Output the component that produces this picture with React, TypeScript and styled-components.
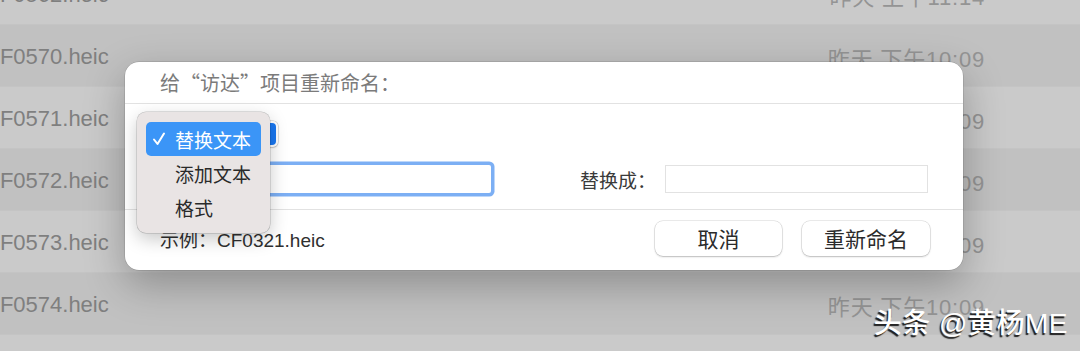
import React from 'react';
import styled, { createGlobalStyle } from 'styled-components';

const GlobalStyle = createGlobalStyle`
   html, body {
      margin: 0;
      padding: 0;
      background: #c6c6c6;
      overflow: hidden;
   }
   * {
      box-sizing: border-box;
   }
`;

const CJK = `"Liberation Sans", "Noto Sans CJK SC", sans-serif`;
const CJK_FIRST = `"Noto Sans CJK SC", "Liberation Sans", sans-serif`;

const Screen = styled.div`
   position: relative;
   width: 1080px;
   height: 351px;
   overflow: hidden;
   font-family: ${CJK};
   background: #c6c6c6;
`;

const FileList = styled.div`
   display: flex;
   flex-direction: column;
   margin-top: -37px;
`;

const FileRow = styled.div<{ $alt?: boolean }>`
   display: flex;
   align-items: center;
   justify-content: space-between;
   height: 62px;
   padding-right: 95px;
   background: ${p => (p.$alt ? '#c1c1c1' : '#cacaca')};
   border-bottom: 1px solid #c4c4c4;
`;

const FileName = styled.span`
   margin-left: -16px;
   padding-top: 2px;
   font-size: 22px;
   color: #7f7f7f;
`;

const FileDate = styled.span`
   padding-top: 2px;
   font-size: 22px;
   letter-spacing: 0.8px;
   color: #949494;
`;

const Dialog = styled.div`
   position: absolute;
   left: 125px;
   top: 62px;
   width: 838px;
   height: 208px;
   display: flex;
   flex-direction: column;
   background: #ffffff;
   border-radius: 14px;
   box-shadow: 0 0 0 0.5px rgba(0, 0, 0, 0.18), 0 14px 40px rgba(0, 0, 0, 0.28);
`;

const DialogTitle = styled.div`
   height: 42px;
   display: flex;
   align-items: center;
   padding-left: 35px;
   font-family: ${CJK_FIRST};
   font-size: 20px;
   color: #7b7b7b;
   border-bottom: 1px solid #e2e2e2;
`;

const DialogBody = styled.div`
   height: 106px;
   display: flex;
   flex-direction: column;
   gap: 18px;
   padding: 17px 35px 0 35px;
   border-bottom: 1px solid #e2e2e2;
`;

const PopupButton = styled.div`
   width: 118px;
   height: 26px;
   display: flex;
   align-items: center;
   justify-content: space-between;
   padding-left: 8px;
   font-size: 16px;
   color: #333;
   background: #fff;
   border-radius: 5px;
   box-shadow: 0 0 0 0.5px rgba(0, 0, 0, 0.2), 0 1px 2px rgba(0, 0, 0, 0.15);
`;

const PopupArrow = styled.span`
   width: 16px;
   height: 22px;
   margin-right: 2px;
   border-radius: 4px;
   background: #1877f2;
`;

const FieldRow = styled.div`
   display: flex;
   align-items: center;
   height: 28px;
`;

const FieldLabel = styled.span<{ $gap?: number }>`
   font-size: 19px;
   color: #3a3a3a;
   margin-left: ${p => p.$gap ?? 0}px;
   margin-right: 9px;
   white-space: nowrap;
`;

const TextField = styled.div<{ $focused?: boolean; $width?: number }>`
   height: 28px;
   flex: ${p => (p.$width ? `0 0 ${p.$width}px` : '1')};
   background: #fff;
   box-shadow: ${p =>
      p.$focused
         ? '0 0 0 3.5px rgba(74, 144, 240, 0.72)'
         : 'inset 0 0 0 1px #e2e2e2, inset 0 -1px 0 #cfcfcf'};
   border-radius: ${p => (p.$focused ? '2px' : '0')};
`;

const DialogFooter = styled.div`
   flex: 1;
   display: flex;
   align-items: center;
   padding: 0 33px 4px 35px;
`;

const Example = styled.span`
   flex: 1;
   font-size: 19px;
   color: #2f2f2f;
`;

const PushButton = styled.button<{ $width: number }>`
   width: ${p => p.$width}px;
   height: 35px;
   margin-left: 20px;
   font-family: ${CJK};
   font-size: 21px;
   color: #2b2b2b;
   background: #fff;
   border: none;
   border-radius: 8px;
   box-shadow: 0 0 0 0.5px rgba(0, 0, 0, 0.16), 0 1px 2px rgba(0, 0, 0, 0.2);
`;

const Menu = styled.div`
   position: absolute;
   left: 12px;
   top: 50px;
   width: 133px;
   padding: 10px 9px 9px 9px;
   display: flex;
   flex-direction: column;
   background: #e9e4e4;
   border-radius: 9px;
   box-shadow: 0 0 0 0.5px rgba(0, 0, 0, 0.22), 0 6px 18px rgba(0, 0, 0, 0.22);
`;

const MenuItem = styled.div<{ $selected?: boolean }>`
   height: 34px;
   display: flex;
   align-items: center;
   padding-left: 6px;
   border-radius: 5px;
   font-size: 19px;
   color: ${p => (p.$selected ? '#fff' : '#2a2a2a')};
   background: ${p => (p.$selected ? '#3b95f7' : 'transparent')};
`;

const CheckSlot = styled.span`
   width: 23px;
   display: flex;
   align-items: center;
`;

const Watermark = styled.div`
   position: absolute;
   right: 12px;
   top: 301px;
   font-size: 28px;
   font-weight: 500;
   color: #ffffff;
   letter-spacing: 0.5px;
   text-shadow: -1.5px 1.5px 1px rgba(0, 0, 0, 0.85);
`;

const files = [
   { name: 'CF0562.heic', date: '昨天 上午11:14' },
   { name: 'CF0570.heic', date: '昨天 下午10:09' },
   { name: 'CF0571.heic', date: '昨天 下午10:09' },
   { name: 'CF0572.heic', date: '昨天 下午10:09' },
   { name: 'CF0573.heic', date: '昨天 下午10:09' },
   { name: 'CF0574.heic', date: '昨天 下午10:09' },
   { name: 'CF0575.heic', date: '昨天 下午10:09' },
];

const menuItems = ['替换文本', '添加文本', '格式'];

const Check = () => (
   <svg width="14" height="14" viewBox="0 0 14 14">
      <path d="M2 7.5 L5.5 12 L12 1.5" fill="none" stroke="#fff" strokeWidth="2" strokeLinecap="round" strokeLinejoin="round" />
   </svg>
);

const App = () => {
   return (
      <Screen>
         <GlobalStyle />
         <FileList>
            {files.map((f, i) => (
               <FileRow key={f.name} $alt={i % 2 === 1}>
                  <FileName>{f.name}</FileName>
                  <FileDate>{f.date}</FileDate>
               </FileRow>
            ))}
         </FileList>

         <Dialog>
            <DialogTitle>给“访达”项目重新命名：</DialogTitle>
            <DialogBody>
               <PopupButton>
                  替换文本
                  <PopupArrow />
               </PopupButton>
               <FieldRow>
                  <FieldLabel>查找：</FieldLabel>
                  <TextField $focused />
                  <FieldLabel $gap={89}>替换成：</FieldLabel>
                  <TextField $width={263} />
               </FieldRow>
            </DialogBody>
            <DialogFooter>
               <Example>示例：CF0321.heic</Example>
               <PushButton $width={127}>取消</PushButton>
               <PushButton $width={128}>重新命名</PushButton>
            </DialogFooter>

            <Menu>
               {menuItems.map((m, i) => (
                  <MenuItem key={m} $selected={i === 0}>
                     <CheckSlot>{i === 0 && <Check />}</CheckSlot>
                     {m}
                  </MenuItem>
               ))}
            </Menu>
         </Dialog>

         <Watermark>头条 @黄杨ME</Watermark>
      </Screen>
   );
};

export default App;
